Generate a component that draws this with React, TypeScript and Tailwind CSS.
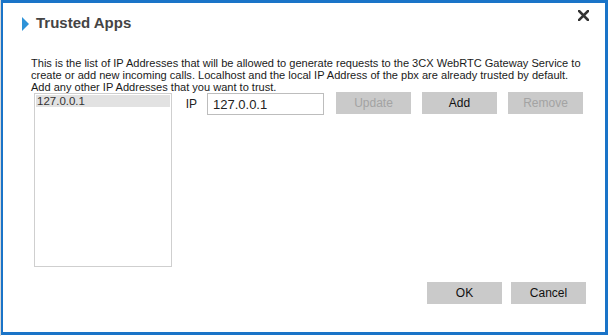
import React, { useState } from "react";

const font = { fontFamily: '"Liberation Sans", Arial, Helvetica, sans-serif' };

function Btn({ label, disabled, onClick }: { label: string; disabled?: boolean; onClick?: () => void }) {
  return (
    <button
      onClick={onClick}
      disabled={disabled}
      className={
        "h-[22px] w-[75px] bg-[#cacaca] text-[12px] leading-[22px] " +
        (disabled ? "text-[#a3a3a3]" : "text-[#111]")
      }
    >
      {label}
    </button>
  );
}

export default function App() {
  const [ips] = useState<string[]>(["127.0.0.1"]);
  const [ip, setIp] = useState("127.0.0.1");

  return (
    <div className="flex h-[336px] w-[611px] bg-white" style={font}>
      <div className="w-[1px] bg-[#d8d8d8]" />
      <div className="flex h-[335px] w-[607px] flex-col border-[3px] border-l-[2px] border-[#1a74c8] bg-white">
        {/* header */}
        <div className="flex items-start justify-between pl-[19px] pr-[15px] pt-[11px]">
          <div className="flex items-center gap-[7px]">
            <svg width="7" height="14" viewBox="0 0 7 14" className="mt-[1px]">
              <polygon points="0,0 7,7 0,14" fill="#2f93d8" />
            </svg>
            <span className="text-[15px] font-bold leading-[18px] text-[#444]">Trusted Apps</span>
          </div>
          <button className="-mt-[5px] p-[1px]" aria-label="Close">
            <svg width="11" height="11" viewBox="0 0 11 11">
              <path d="M1 1 L10 10 M10 1 L1 10" stroke="#333" strokeWidth="2.6" strokeLinecap="square" />
            </svg>
          </button>
        </div>

        {/* body */}
        <div className="flex flex-1 flex-col pl-[28px] pr-[22px]">
          <p className="mt-[25px] whitespace-nowrap text-[11.05px] leading-[12px] text-[#1a1a1a]">
            This is the list of IP Addresses that will be allowed to generate requests to the 3CX WebRTC Gateway Service to
            <br />
            create or add new incoming calls. Localhost and the local IP Address of the pbx are already trusted by default.
            <br />
            Add any other IP Addresses that you want to trust.
          </p>

          <div className="flex items-start">
            <div className="ml-[3px] h-[174px] w-[139px] border border-[#cfcfcf] p-[1px]">
              {ips.map((x) => (
                <div key={x} className="h-[12px] bg-[#e2e2e2] pl-[1px] text-[11.5px] leading-[12px] text-[#333]">
                  {x}
                </div>
              ))}
            </div>

            <span className="ml-[14px] mt-[5px] text-[12px] leading-[12px] text-[#222]">IP</span>
            <input
              value={ip}
              onChange={(e) => setIp(e.target.value)}
              className="ml-[10px] h-[22px] w-[117px] border border-[#bdbdbd] px-[5px] text-[13px] text-[#222] outline-none"
            />
            <div className="ml-[12px] -mt-[1px] flex gap-[11px]">
              <Btn label="Update" disabled />
              <Btn label="Add" />
              <Btn label="Remove" disabled />
            </div>
          </div>

          <div className="-mr-[3px] mt-[15px] flex justify-end gap-[9px]">
            <Btn label="OK" />
            <Btn label="Cancel" />
          </div>
        </div>
      </div>
    </div>
  );
}
